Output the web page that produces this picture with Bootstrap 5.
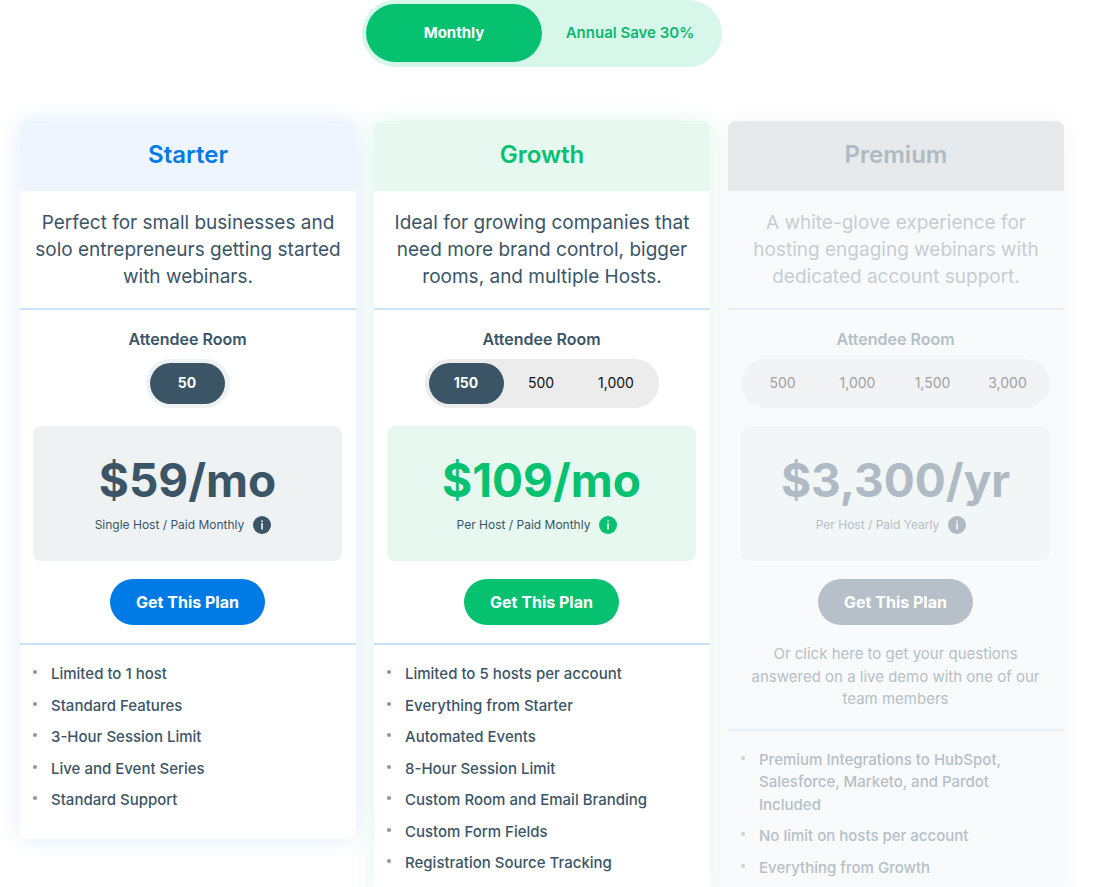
<!DOCTYPE html>
<html lang="en">
<head>
<meta charset="utf-8">
<meta name="viewport" content="width=device-width, initial-scale=1">
<title>Pricing plans</title>
<link href="https://cdn.jsdelivr.net/npm/bootstrap@5.3.0/dist/css/bootstrap.min.css" rel="stylesheet">
<style>
  :root { --ink: #3b5566; --green: #05c170; --blue: #007be5; --rule: #cbe2f9; }
  body { font-family: Inter, "Open Sans", sans-serif; font-size: 15px; color: var(--ink); background: #fff; }
  .pricing { padding: 0 55px 0 20px; }

  .billing { width: 360px; padding: 4px 4px 5px; background: #d6f7ea; margin-bottom: 54px; }
  .billing label { height: 58px; color: #10b76f; font-weight: 600; }
  .billing label:first-of-type { width: 176px; }
  .billing .btn-check:checked + label { background: var(--green); color: #fff; font-weight: 700; }

  .plans { --bs-gutter-x: 18px; }
  .plan { --accent: var(--ink); --glow: rgba(0, 123, 229, .12); border-radius: 8px; background: #fff; box-shadow: 0 0 24px var(--glow); }
  .plan-head { height: 70px; padding-bottom: 2px; border-radius: 8px 8px 0 0; background: var(--tint); }
  .plan-head h2 { font-size: 24px; font-weight: 600; color: var(--title); }
  .plan-pitch { padding: 18px 10px; font-size: 19px; line-height: 27px; border-bottom: 2px solid var(--rule); }
  .plan-body { padding: 18px 14px 18px 13px; border-bottom: 2px solid var(--rule); }
  .room-title { font-size: 16px; line-height: 22px; font-weight: 600; margin-bottom: 9px; }
  .room-set { padding: 4px 5px 4px 4px; background: #ececec; margin-bottom: 18px; }
  .room-set label { width: 75px; height: 41px; padding-bottom: 2px; font-size: 14px; color: #111; }
  .room-set .btn-check:checked + label { background: #3b5566; color: #fff; font-weight: 700; }
  .seg { border-radius: 50rem; display: flex; align-items: center; justify-content: center; cursor: pointer; }
  .price-box { height: 135px; border-radius: 8px; background: var(--box); margin-bottom: 18px; padding-top: 25px; }
  .price { font-size: 46px; line-height: 58px; font-weight: 700; color: var(--accent); }
  .terms { font-size: 12px; line-height: 18px; padding: 7px 9px 0 0; gap: 9px; }
  .info { width: 18px; height: 18px; color: var(--accent); }
  .info svg { display: block; }
  .get-plan { width: 155px; height: 46px; font-size: 16px; font-weight: 700; color: #fff; background: var(--cta); }
  .get-plan:hover { color: #fff; background: var(--cta); }
  .demo-note { line-height: 1.5; margin-top: 18px; }
  .perks { padding: 18px 13px; line-height: 1.5; font-weight: 500; }
  .perks li { display: flex; margin-bottom: 9px; }
  .perks li::before { content: ""; flex: none; width: 4px; height: 4px; margin: 7px 14px 0 0; border-radius: 50%; background: #8799a3; }

  .starter { --title: var(--blue); --tint: #eef5fe; --box: #eef2f3; --cta: var(--blue); }
  .starter .room-set { background: #eef2f3; }
  .growth { --title: var(--green); --tint: #e6f8f0; --box: #e6f8f0; --cta: var(--green); --accent: var(--green); --glow: rgba(5, 193, 112, .12); }
  .premium { --ink: #b5c0c7; --title: #afbac2; --tint: #e6eaed; --box: #f2f6f7; --cta: #b7c0c8; --accent: #afbac4; --rule: #e7f0fa; --glow: rgba(59, 85, 102, .05); background: #f9fafc; color: #b5c0c7; }
  .premium .plan-pitch { color: #c6ced3; }
  .premium .room-set { background: #f2f3f5; }
  .premium .room-set label { color: #a0a2a4; }
  .premium .perks li::before { background: #cbd3d9; }
</style>
</head>
<body>
<main class="pricing">
  <div class="billing d-flex rounded-pill mx-auto" role="group" aria-label="Billing period">
    <input class="btn-check" type="radio" name="billing" id="monthly" checked>
    <label class="seg" for="monthly">Monthly</label>
    <input class="btn-check" type="radio" name="billing" id="annual">
    <label class="seg flex-grow-1" for="annual">Annual Save 30%</label>
  </div>

  <div class="row row-cols-3 plans align-items-start text-center">
    <div class="col">
      <section class="plan starter">
        <header class="plan-head d-flex align-items-center justify-content-center"><h2 class="m-0">Starter</h2></header>
        <p class="plan-pitch m-0">Perfect for small businesses and solo entrepreneurs getting started with webinars.</p>
        <div class="plan-body d-flex flex-column align-items-center">
          <h3 class="room-title">Attendee Room</h3>
          <div class="room-set d-flex rounded-pill">
            <input class="btn-check" type="radio" name="room-s" id="s50" checked><label class="seg" for="s50">50</label>
          </div>
          <div class="price-box align-self-stretch">
            <div class="price">$59/mo</div>
            <div class="terms d-flex align-items-center justify-content-center"><span>Single Host / Paid Monthly</span>
              <button type="button" class="info border-0 bg-transparent p-0" aria-label="More information"><svg width="18" height="18" viewBox="0 0 18 18"><circle cx="9" cy="9" r="9" fill="currentColor"/><path d="M8.2 4.4h1.7v1.5H8.2zM8.2 6.9h1.7v6.5H8.2z" fill="#eef2f3"/></svg></button>
            </div>
          </div>
          <button type="button" class="btn get-plan rounded-pill border-0 p-0">Get This Plan</button>
        </div>
        <ul class="perks list-unstyled m-0 text-start">
          <li>Limited to 1 host</li>
          <li>Standard Features</li>
          <li>3-Hour Session Limit</li>
          <li>Live and Event Series</li>
          <li>Standard Support</li>
        </ul>
      </section>
    </div>

    <div class="col">
      <section class="plan growth">
        <header class="plan-head d-flex align-items-center justify-content-center"><h2 class="m-0">Growth</h2></header>
        <p class="plan-pitch m-0">Ideal for growing companies that need more brand control, bigger rooms, and multiple Hosts.</p>
        <div class="plan-body d-flex flex-column align-items-center">
          <h3 class="room-title">Attendee Room</h3>
          <div class="room-set d-flex rounded-pill">
            <input class="btn-check" type="radio" name="room-g" id="g150" checked><label class="seg" for="g150">150</label>
            <input class="btn-check" type="radio" name="room-g" id="g500"><label class="seg" for="g500">500</label>
            <input class="btn-check" type="radio" name="room-g" id="g1000"><label class="seg" for="g1000">1,000</label>
          </div>
          <div class="price-box align-self-stretch">
            <div class="price">$109/mo</div>
            <div class="terms d-flex align-items-center justify-content-center"><span>Per Host / Paid Monthly</span>
              <button type="button" class="info border-0 bg-transparent p-0" aria-label="More information"><svg width="18" height="18" viewBox="0 0 18 18"><circle cx="9" cy="9" r="9" fill="currentColor"/><path d="M8.2 4.4h1.7v1.5H8.2zM8.2 6.9h1.7v6.5H8.2z" fill="#e6f8f0"/></svg></button>
            </div>
          </div>
          <button type="button" class="btn get-plan rounded-pill border-0 p-0">Get This Plan</button>
        </div>
        <ul class="perks list-unstyled m-0 text-start">
          <li>Limited to 5 hosts per account</li>
          <li>Everything from Starter</li>
          <li>Automated Events</li>
          <li>8-Hour Session Limit</li>
          <li>Custom Room and Email Branding</li>
          <li>Custom Form Fields</li>
          <li>Registration Source Tracking</li>
        </ul>
      </section>
    </div>

    <div class="col">
      <section class="plan premium">
        <header class="plan-head d-flex align-items-center justify-content-center"><h2 class="m-0">Premium</h2></header>
        <p class="plan-pitch m-0">A white-glove experience for hosting engaging webinars with dedicated account support.</p>
        <div class="plan-body d-flex flex-column align-items-center">
          <h3 class="room-title">Attendee Room</h3>
          <div class="room-set d-flex rounded-pill">
            <input class="btn-check" type="radio" name="room-p" id="p500"><label class="seg" for="p500">500</label>
            <input class="btn-check" type="radio" name="room-p" id="p1000"><label class="seg" for="p1000">1,000</label>
            <input class="btn-check" type="radio" name="room-p" id="p1500"><label class="seg" for="p1500">1,500</label>
            <input class="btn-check" type="radio" name="room-p" id="p3000"><label class="seg" for="p3000">3,000</label>
          </div>
          <div class="price-box align-self-stretch">
            <div class="price">$3,300/yr</div>
            <div class="terms d-flex align-items-center justify-content-center"><span>Per Host / Paid Yearly</span>
              <button type="button" class="info border-0 bg-transparent p-0" aria-label="More information"><svg width="18" height="18" viewBox="0 0 18 18"><circle cx="9" cy="9" r="9" fill="currentColor"/><path d="M8.2 4.4h1.7v1.5H8.2zM8.2 6.9h1.7v6.5H8.2z" fill="#f2f6f7"/></svg></button>
            </div>
          </div>
          <button type="button" class="btn get-plan rounded-pill border-0 p-0">Get This Plan</button>
          <p class="demo-note mb-0">Or click here to get your questions answered on a live demo with one of our team members</p>
        </div>
        <ul class="perks list-unstyled m-0 text-start">
          <li>Premium Integrations to HubSpot, Salesforce, Marketo, and Pardot Included</li>
          <li>No limit on hosts per account</li>
          <li>Everything from Growth</li>
        </ul>
      </section>
    </div>
  </div>
</main>
<script src="https://cdn.jsdelivr.net/npm/bootstrap@5.3.0/dist/js/bootstrap.bundle.min.js"></script>
</body>
</html>
